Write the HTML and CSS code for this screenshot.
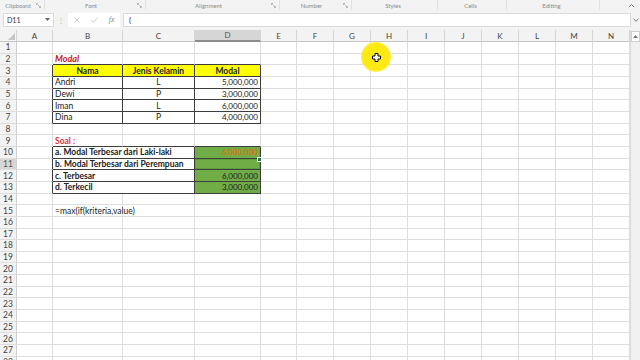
FILE: index.html
```html
<html>
	<head>
	<meta charset="utf-8"/>
		<link rel="stylesheet" href="styles.css">
	</head>
	<body>
		<div class="top">
			<div class="ribbon">
				<div class="grp" style="width:45px"><span class="lbl">Clipboard</span><svg class="lnch" width="5" height="5" viewBox="0 0 5 5"><path d="M0.5 2V0.5H2M4.5 3V4.5H3M1.5 1.5L4 4" stroke="#999" stroke-width="0.7" fill="none"/></svg></div>
				<div class="grp" style="width:101px"><span class="lbl">Font</span><svg class="lnch" width="5" height="5" viewBox="0 0 5 5"><path d="M0.5 2V0.5H2M4.5 3V4.5H3M1.5 1.5L4 4" stroke="#999" stroke-width="0.7" fill="none"/></svg></div>
				<div class="grp" style="width:134px"><span class="lbl">Alignment</span><svg class="lnch" width="5" height="5" viewBox="0 0 5 5"><path d="M0.5 2V0.5H2M4.5 3V4.5H3M1.5 1.5L4 4" stroke="#999" stroke-width="0.7" fill="none"/></svg></div>
				<div class="grp" style="width:72px"><span class="lbl">Number</span><svg class="lnch" width="5" height="5" viewBox="0 0 5 5"><path d="M0.5 2V0.5H2M4.5 3V4.5H3M1.5 1.5L4 4" stroke="#999" stroke-width="0.7" fill="none"/></svg></div>
				<div class="grp" style="width:86px"><span class="lbl">Styles</span></div>
				<div class="grp" style="width:69px"><span class="lbl">Cells</span></div>
				<div class="grp" style="width:93px"><span class="lbl">Editing</span></div>
				<div class="collapse"><svg width="7" height="5" viewBox="0 0 7 5"><path d="M1 4L3.5 1.5L6 4" stroke="#777" stroke-width="1" fill="none"/></svg></div>
			</div>
			<div class="fbar">
				<div class="namebox"><span>D11</span><svg width="5" height="3" viewBox="0 0 5 3"><path d="M0 0H5L2.5 3Z" fill="#666"/></svg></div>
				<div class="dots">&#8942;</div>
				<div class="fnbtns">
					<svg width="6" height="6" viewBox="0 0 6 6"><path d="M0.5 0.5L5.5 5.5M5.5 0.5L0.5 5.5" stroke="#c4c4c4" stroke-width="0.9"/></svg>
					<svg width="7" height="6" viewBox="0 0 7 6"><path d="M0.5 3.2L2.5 5.2L6.5 0.8" stroke="#c4c4c4" stroke-width="0.9" fill="none"/></svg>
					<span class="fx">fx</span>
				</div>
				<div class="formula">(</div>
				<div class="fchev"><svg width="6" height="4" viewBox="0 0 6 4"><path d="M0.5 0.8L3 3.2L5.5 0.8" stroke="#666" stroke-width="0.9" fill="none"/></svg></div>
			</div>
		</div>

		<div class="sheet">
		<table>
			<colgroup>
				<col style="width:17px"><col style="width:36px"><col style="width:70px"><col style="width:72px"><col style="width:66px"><col style="width:36px">
				<col style="width:37px"><col style="width:37px"><col style="width:37px"><col style="width:37px"><col style="width:37px"><col style="width:37px"><col style="width:37px"><col style="width:37px"><col style="width:37px">
			</colgroup>
			<tr class="colhd">
				<th class="corner"><svg width="7" height="7" viewBox="0 0 7 7"><path d="M7 0V7H0Z" fill="#c6c6c6"/></svg></th>
				<th>A</th><th>B</th><th>C</th><th class="sel">D</th><th>E</th><th>F</th><th>G</th><th>H</th><th>I</th><th>J</th><th>K</th><th>L</th><th>M</th><th>N</th>
			</tr>
			<tr><th>1</th><td></td><td></td><td></td><td></td><td></td><td></td><td></td><td></td><td></td><td></td><td></td><td></td><td></td><td></td></tr>
			<tr><th>2</th><td></td><td class="t ttl">Modal</td><td class="t"></td><td class="t"></td><td></td><td></td><td></td><td></td><td></td><td></td><td></td><td></td><td></td><td></td></tr>
			<tr><th>3</th><td class="l"></td><td class="b hd">Nama</td><td class="b hd">Jenis Kelamin</td><td class="b hd">Modal</td><td></td><td></td><td></td><td></td><td></td><td></td><td></td><td></td><td></td><td></td></tr>
			<tr><th>4</th><td class="l"></td><td class="b">Andri</td><td class="b c">L</td><td class="b r">5,000,000</td><td></td><td></td><td></td><td></td><td></td><td></td><td></td><td></td><td></td><td></td></tr>
			<tr><th>5</th><td class="l"></td><td class="b">Dewi</td><td class="b c">P</td><td class="b r">3,000,000</td><td></td><td></td><td></td><td></td><td></td><td></td><td></td><td></td><td></td><td></td></tr>
			<tr><th>6</th><td class="l"></td><td class="b">Iman</td><td class="b c">L</td><td class="b r">6,000,000</td><td></td><td></td><td></td><td></td><td></td><td></td><td></td><td></td><td></td><td></td></tr>
			<tr><th>7</th><td class="l"></td><td class="b">Dina</td><td class="b c">P</td><td class="b r">4,000,000</td><td></td><td></td><td></td><td></td><td></td><td></td><td></td><td></td><td></td><td></td></tr>
			<tr><th>8</th><td></td><td></td><td></td><td></td><td></td><td></td><td></td><td></td><td></td><td></td><td></td><td></td><td></td><td></td></tr>
			<tr><th>9</th><td></td><td class="t soal">Soal :</td><td class="t"></td><td class="t"></td><td></td><td></td><td></td><td></td><td></td><td></td><td></td><td></td><td></td><td></td></tr>
			<tr><th>10</th><td class="l"></td><td class="b q" colspan="2">a. Modal Terbesar dari Laki-laki</td><td class="b g r hot">6,000,000</td><td></td><td></td><td></td><td></td><td></td><td></td><td></td><td></td><td></td><td></td></tr>
			<tr><th class="sel">11</th><td class="l"></td><td class="b q" colspan="2">b. Modal Terbesar dari Perempuan</td><td class="b g cur"><span class="handle"></span></td><td></td><td></td><td></td><td></td><td></td><td></td><td></td><td></td><td></td><td></td></tr>
			<tr><th>12</th><td class="l"></td><td class="b q" colspan="2">c. Terbesar</td><td class="b g r">6,000,000</td><td></td><td></td><td></td><td></td><td></td><td></td><td></td><td></td><td></td><td></td></tr>
			<tr><th>13</th><td class="l"></td><td class="b q" colspan="2">d. Terkecil</td><td class="b g r">3,000,000</td><td></td><td></td><td></td><td></td><td></td><td></td><td></td><td></td><td></td><td></td></tr>
			<tr><th>14</th><td></td><td></td><td></td><td></td><td></td><td></td><td></td><td></td><td></td><td></td><td></td><td></td><td></td><td></td></tr>
			<tr><th>15</th><td></td><td>=max(if(kriteria,value)</td><td></td><td></td><td></td><td></td><td></td><td></td><td></td><td></td><td></td><td></td><td></td><td></td></tr>
			<tr><th>16</th><td></td><td></td><td></td><td></td><td></td><td></td><td></td><td></td><td></td><td></td><td></td><td></td><td></td><td></td></tr>
			<tr><th>17</th><td></td><td></td><td></td><td></td><td></td><td></td><td></td><td></td><td></td><td></td><td></td><td></td><td></td><td></td></tr>
			<tr><th>18</th><td></td><td></td><td></td><td></td><td></td><td></td><td></td><td></td><td></td><td></td><td></td><td></td><td></td><td></td></tr>
			<tr><th>19</th><td></td><td></td><td></td><td></td><td></td><td></td><td></td><td></td><td></td><td></td><td></td><td></td><td></td><td></td></tr>
			<tr><th>20</th><td></td><td></td><td></td><td></td><td></td><td></td><td></td><td></td><td></td><td></td><td></td><td></td><td></td><td></td></tr>
			<tr><th>21</th><td></td><td></td><td></td><td></td><td></td><td></td><td></td><td></td><td></td><td></td><td></td><td></td><td></td><td></td></tr>
			<tr><th>22</th><td></td><td></td><td></td><td></td><td></td><td></td><td></td><td></td><td></td><td></td><td></td><td></td><td></td><td></td></tr>
			<tr><th>23</th><td></td><td></td><td></td><td></td><td></td><td></td><td></td><td></td><td></td><td></td><td></td><td></td><td></td><td></td></tr>
			<tr><th>24</th><td></td><td></td><td></td><td></td><td></td><td></td><td></td><td></td><td></td><td></td><td></td><td></td><td></td><td></td></tr>
			<tr><th>25</th><td></td><td></td><td></td><td></td><td></td><td></td><td></td><td></td><td></td><td></td><td></td><td></td><td></td><td></td></tr>
			<tr><th>26</th><td></td><td></td><td></td><td></td><td></td><td></td><td></td><td></td><td></td><td></td><td></td><td></td><td></td><td></td></tr>
			<tr><th>27</th><td></td><td></td><td></td><td></td><td></td><td></td><td></td><td></td><td></td><td></td><td></td><td></td><td></td><td></td></tr>
			<tr><th>28</th><td></td><td></td><td></td><td></td><td></td><td></td><td></td><td></td><td></td><td></td><td></td><td></td><td></td><td></td></tr>
		</table>
		<div class="vscroll">
			<div class="up"><svg width="5" height="3" viewBox="0 0 5 3"><path d="M0 3H5L2.5 0Z" fill="#777"/></svg></div>
		</div>
		</div>

		<!-- pointer highlight from the screen recording -->
		<div class="spot">
			<svg width="9" height="9" viewBox="0 0 9 9"><path d="M3 0.5H6V3H8.5V6H6V8.5H3V6H0.5V3H3Z" fill="#fff" stroke="#000" stroke-width="1"/></svg>
		</div>
	</body>
</html>
```

FILE: styles.css
```css
body{
	margin:0;
	width:640px;
	height:360px;
	overflow:hidden;
	background:#fff;
	font-family:Lato, "Open Sans", sans-serif;
	position:relative;
}
.top{
	background:#f3f3f3;
	padding-bottom:3px;
}
.ribbon{
	display:flex;
	height:10px;
	font-size:6px;
	color:#8a8a8a;
}
.grp{
	display:flex;
	align-items:center;
	border-right:1px solid #e1e1e1;
	box-sizing:border-box;
	padding-right:3px;
}
.grp .lbl{flex:1;text-align:center;}
.collapse{
	flex:1;
	display:flex;
	justify-content:flex-end;
	align-items:center;
	padding-right:5px;
}
.fbar{
	display:flex;
	align-items:center;
	height:15px;
	padding:2px 0 0 3px;
}
.namebox{
	width:51px;
	height:14px;
	box-sizing:border-box;
	background:#fff;
	border:1px solid #dadada;
	display:flex;
	align-items:center;
	justify-content:space-between;
	padding:0 3px;
	font-size:7px;
	color:#333;
}
.dots{
	width:14px;
	text-align:center;
	color:#b5b5b5;
	font-size:8px;
}
.fnbtns{
	width:52px;
	height:14px;
	background:#fff;
	display:flex;
	align-items:center;
	justify-content:space-around;
}
.fx{
	font-family:"Liberation Serif", serif;
	font-style:italic;
	font-size:8px;
	color:#888;
}
.formula{
	width:508px;
	height:14px;
	margin-left:3px;
	box-sizing:border-box;
	background:#fff;
	border:1px solid #dadada;
	padding-left:5px;
	font-size:8px;
	line-height:12px;
	color:#333;
}
.fchev{
	flex:1;
	display:flex;
	justify-content:center;
}
.sheet{
	display:flex;
}
table{
	border-collapse:separate;
	border-spacing:0;
	table-layout:fixed;
	width:630px;
	font-size:8.5px;
	color:#222;
}
tr{height:11.66px;}
tr.colhd{height:11px;}
td,th{
	padding:0 2px;
	line-height:10px;
	white-space:nowrap;
	border-right:1px solid #dedede;
	border-bottom:1px solid #dedede;
}
th{
	background:#f3f3f3;
	font-weight:normal;
	color:#444;
	text-align:center;
	padding:0;
	border-right-color:#cfcfcf;
}
.colhd th{
	font-size:8px;
	border-bottom-color:#c6c6c6;
	border-right-color:#d6d6d6;
}
th.corner{
	text-align:right;
	vertical-align:bottom;
	padding:0 1px 1px 0;
	line-height:0;
}
th.sel{
	background:#d6d6d6;
	color:#555;
}
.colhd th.sel{
	border-bottom:2px solid #8c8c8c;
}
/* dark table borders */
.b{border-right-color:#3d3d3d;border-bottom-color:#3d3d3d;}
.l{border-right-color:#3d3d3d;}
.t{border-bottom-color:#3d3d3d;}
.hd{
	background:#ffff00;
	font-weight:bold;
	text-align:center;
}
.c{text-align:center;}
.r{
	text-align:right;
	font-size:8px;
}
.ttl{
	color:#c9211e;
	font-weight:bold;
	font-style:italic;
	font-size:9px;
}
.soal{
	color:#e0303a;
	font-weight:bold;
}
.q{font-weight:bold;}
.g{background:#70ad47;}
.hot{color:#f45d00;}
.cur{
	position:relative;
	box-shadow:inset 0 0 0 1px #5e9e3a;
}
.handle{
	position:absolute;
	right:-2px;
	top:-2px;
	width:3px;
	height:3px;
	background:#217346;
	border:1px solid #fff;
}
.vscroll{
	width:10px;
	background:#f0f0f0;
	border-left:1px solid #dcdcdc;
	box-sizing:border-box;
}
.up{
	height:11px;
	background:#fff;
	border:1px solid #cfcfcf;
	box-sizing:border-box;
	display:flex;
	align-items:center;
	justify-content:center;
	margin:1px 0 0 0;
}
.spot{
	position:absolute;
	left:361px;
	top:42px;
	width:30px;
	height:30px;
	border-radius:50%;
	background:radial-gradient(circle, #ffe912 60%, rgba(255,233,18,0.5) 85%, rgba(255,233,18,0) 100%);
	display:flex;
	align-items:center;
	justify-content:center;
}
```
